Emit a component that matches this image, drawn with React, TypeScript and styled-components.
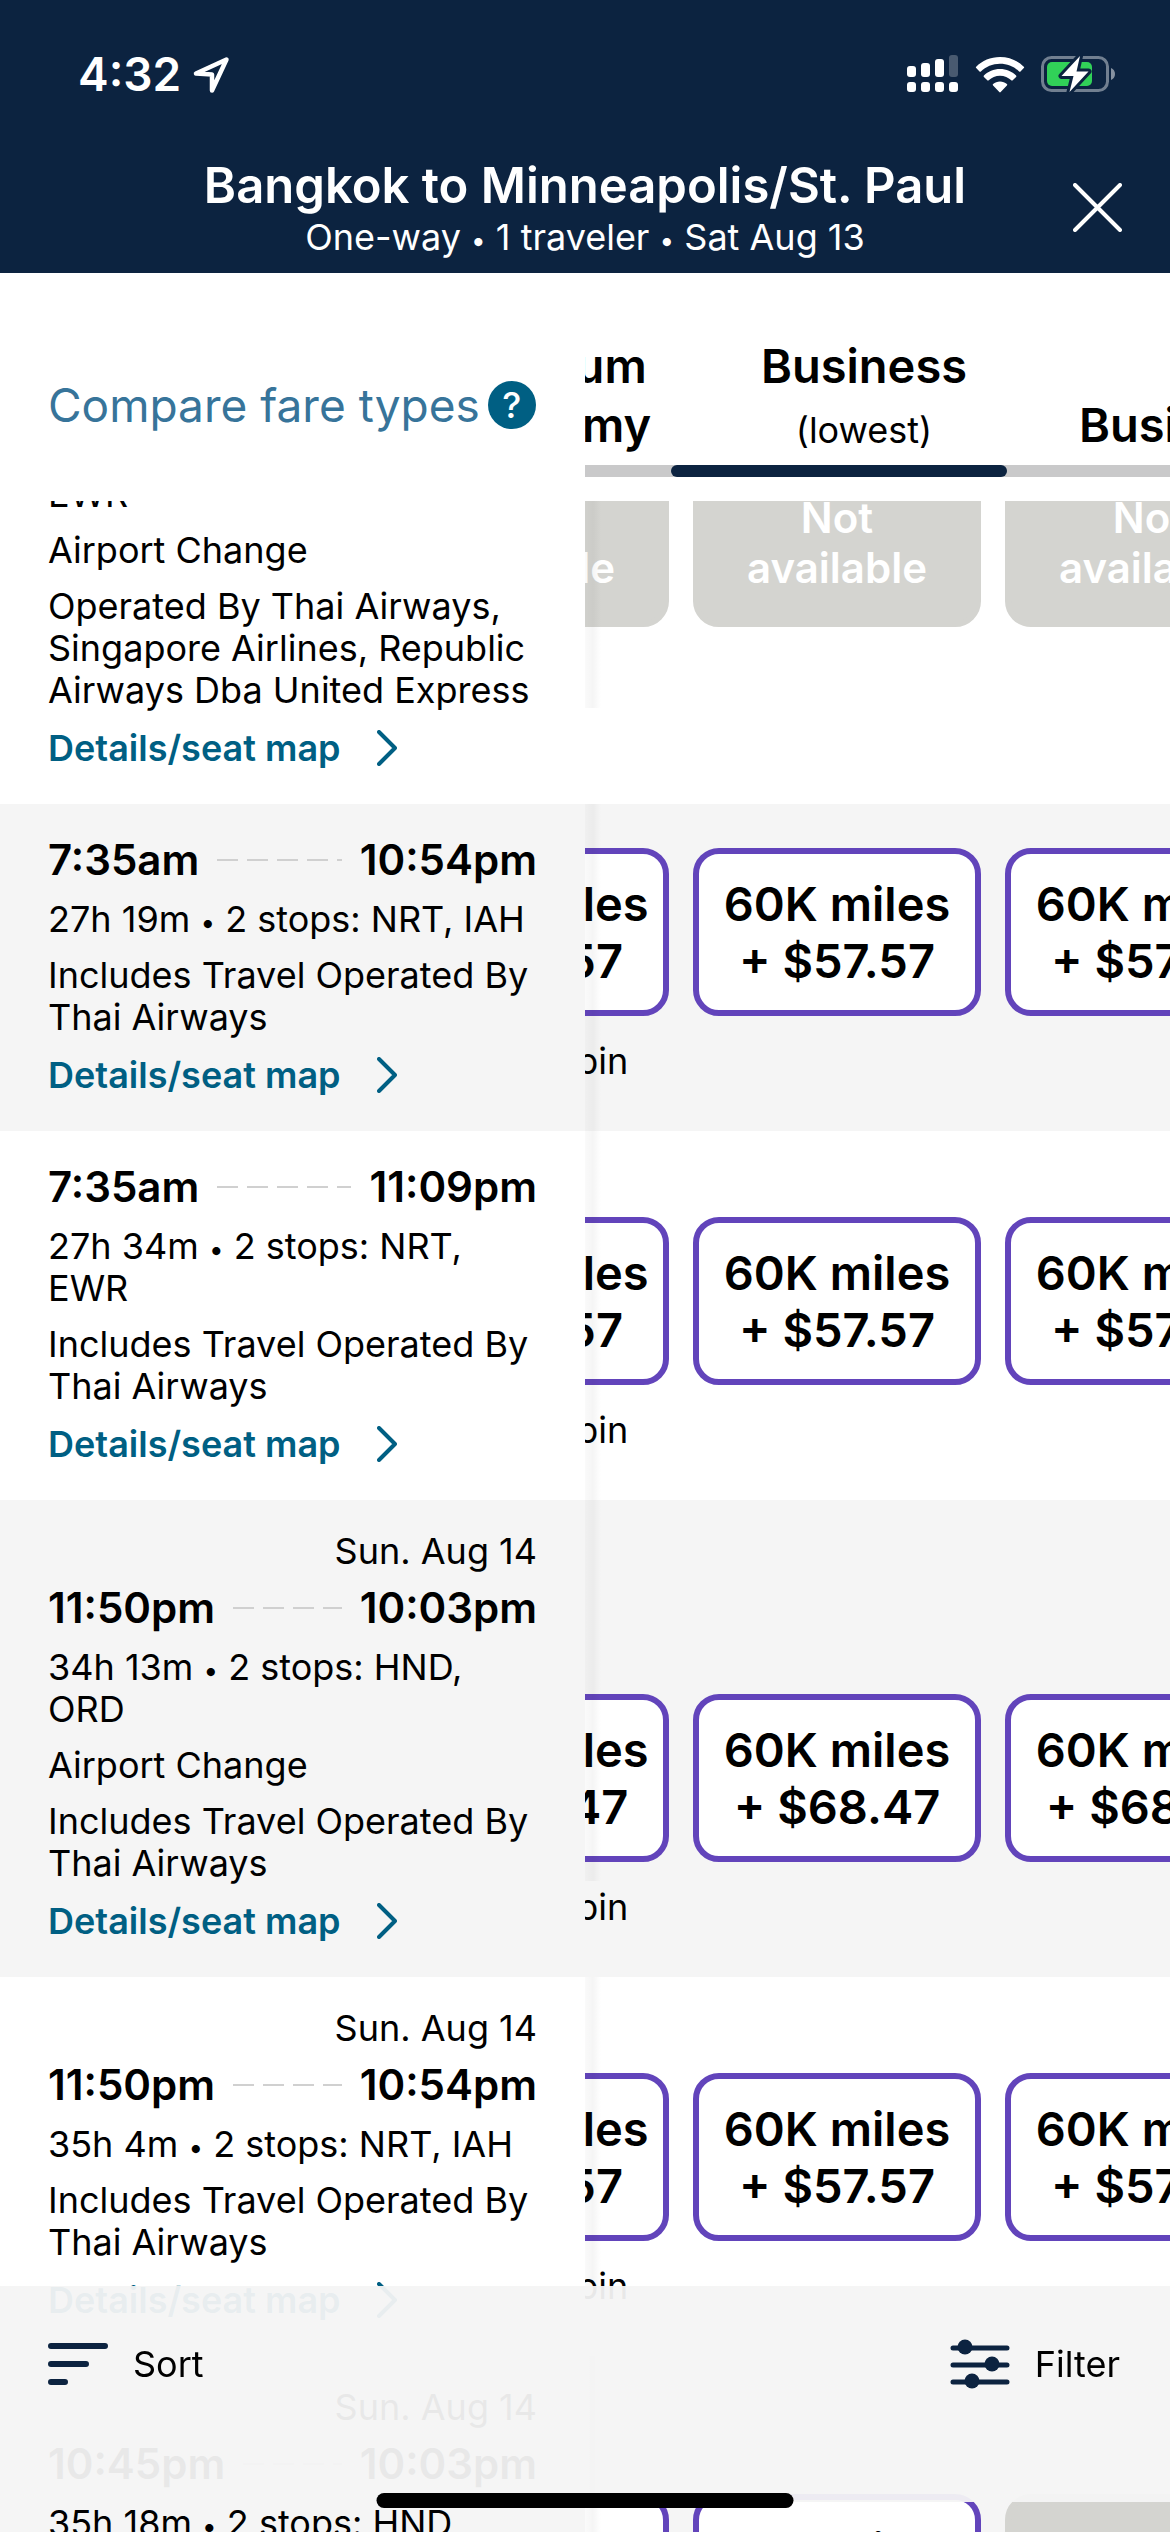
import React, { Fragment, useLayoutEffect, useRef } from "react";
import styled, { createGlobalStyle } from "styled-components";

const navy = "#0c2340";
const teal = "#005f83";
const purple = "#6244bb";
const sans = `Inter, "Noto Sans", "Liberation Sans", sans-serif`;

const GlobalStyle = createGlobalStyle`
  * { box-sizing: border-box; }
  body { margin: 0; background: #fff; color: #000; font-family: ${sans}; }
  button { font-family: inherit; color: inherit; margin: 0; padding: 0; border: 0; background: none; }
`;

const Screen = styled.div`
  position: relative;
  display: flex;
  flex-direction: column;
  height: 100vh;
  overflow: hidden;
`;

/* Header */
const Header = styled.header`
  background: ${navy};
  color: #fff;
`;

const StatusBar = styled.div`
  display: flex;
  align-items: center;
  justify-content: space-between;
  height: 148px;
  padding: 0 54px 0 78px;
`;

const StatusGroup = styled.div<{ $gap: number }>`
  display: flex;
  align-items: center;
  gap: ${(p) => p.$gap}px;
`;

const Clock = styled.span`
  font-size: 46px;
  line-height: 54px;
  font-weight: 600;
`;

const TitleBar = styled.div`
  display: grid;
  grid-template-columns: 1fr auto 1fr;
  align-items: center;
  padding: 8px 48px 15px;
`;

const TitleText = styled.div`
  grid-column: 2;
  text-align: center;
`;

const Title = styled.h1`
  margin: 0;
  font-size: 49px;
  line-height: 60px;
  font-weight: 600;
`;

const Subtitle = styled.p`
  margin: 0;
  font-size: 36px;
  line-height: 42px;
`;

const Bullet = styled.span`
  font-size: 26px;
  line-height: 0;
`;

const CloseButton = styled.button`
  grid-column: 3;
  justify-self: end;
  display: flex;
`;

/* Fare type header */
const Split = styled.div`
  display: grid;
  grid-template-columns: minmax(0, 1fr) minmax(0, 1fr);
`;

const CompareCell = styled.div`
  display: flex;
  align-items: center;
  padding: 36px 48px 0;
`;

const CompareLink = styled.a`
  display: flex;
  align-items: center;
  gap: 8px;
  color: #37749a;
  font-size: 46px;
  line-height: 57px;
  white-space: nowrap;
  text-decoration: none;
`;

const HelpBadge = styled.span`
  display: flex;
  align-items: center;
  justify-content: center;
  flex: none;
  width: 48px;
  height: 48px;
  border-radius: 50%;
  background: ${teal};
  color: #fff;
  font-size: 36px;
  line-height: 42px;
  font-weight: 500;
`;

const Scroller = styled.div`
  overflow-x: auto;
  scrollbar-width: none;
`;

const CabinTrack = styled.div`
  display: flex;
  flex-direction: column;
  width: max-content;
  padding: 63px 0 24px;
`;

const CabinTabs = styled.div`
  display: flex;
  align-items: flex-end;
  padding: 0 6px 11px;
`;

const CabinTab = styled.button`
  width: 318px;
  font-size: 47px;
  line-height: 59px;
  font-weight: 600;
`;

const CabinNote = styled.span`
  display: block;
  margin-top: 12px;
  font-size: 36px;
  line-height: 47px;
  font-weight: 400;
`;

const Rail = styled.div`
  padding-left: 290px;
  background: #c9c9ca;
`;

const RailThumb = styled.div`
  width: 336px;
  height: 12px;
  border-radius: 6px;
  background: ${navy};
`;

/* Flight list */
const FlightList = styled.main`
  flex: 1;
  min-height: 0;
  overflow-y: auto;
  scrollbar-width: none;
`;

const FlightRow = styled(Split)<{ $shaded: boolean }>`
  background: ${(p) => (p.$shaded ? "#f5f5f5" : "#fff")};
`;

const FlightInfo = styled.div`
  display: flex;
  flex-direction: column;
  gap: 14px;
  padding: 32px 48px 33px;
  font-size: 36px;
  line-height: 42px;
`;

const ArrivalDate = styled.div`
  line-height: 38px;
  text-align: right;
`;

const Times = styled.div`
  display: flex;
  align-items: center;
  gap: 18px;
  font-size: 42px;
  line-height: 48px;
  font-weight: 600;
`;

const Dashes = styled.span`
  flex: 1;
  height: 2px;
  background: repeating-linear-gradient(90deg, #d0d0d0 0 21px, transparent 21px 30px);
`;

const Line = styled.div``;

const DetailsLink = styled.a`
  display: flex;
  align-items: center;
  gap: 36px;
  color: ${teal};
  line-height: 46px;
  font-weight: 600;
  text-decoration: none;
`;

const FarePane = styled.div<{ $shadowEnd: number }>`
  position: relative;
  display: flex;
  min-width: 0;
  &::after {
    content: "";
    position: absolute;
    top: 0;
    left: 0;
    bottom: ${(p) => p.$shadowEnd}px;
    width: 16px;
    background: linear-gradient(90deg, rgba(0, 0, 0, 0.02), rgba(0, 0, 0, 0.04) 50%, transparent);
    pointer-events: none;
  }
`;

const FareScroller = styled(Scroller)`
  display: flex;
  align-items: flex-end;
  flex: 1;
`;

const FareTrack = styled.div<{ $below: number }>`
  display: flex;
  gap: 24px;
  height: ${(p) => p.$below + 168}px;
`;

const FareColumn = styled.div`
  flex: none;
  width: 288px;
  text-align: center;
`;

const FareButton = styled.button`
  display: block;
  width: 100%;
  height: 168px;
  border: 6px solid ${purple};
  border-radius: 26px;
  background: #fff;
  font-size: 47px;
  line-height: 57px;
  font-weight: 600;
  white-space: pre-line;
  &:disabled {
    border-color: #d4d4d0;
    background: #d4d4d0;
    color: #fff;
    font-size: 42px;
    line-height: 50px;
  }
`;

const CabinCaption = styled.div`
  margin-top: 24px;
  font-size: 36px;
  line-height: 42px;
`;

/* Bottom toolbar */
const Toolbar = styled.footer`
  position: absolute;
  left: 0;
  right: 0;
  bottom: 30px;
  display: flex;
  align-items: flex-start;
  justify-content: space-between;
  height: 216px;
  padding: 51px 50px 0 48px;
  background: rgba(244, 244, 244, 0.95);
`;

const ToolButton = styled.button`
  display: flex;
  align-items: center;
  gap: 25px;
  font-size: 36px;
  line-height: 54px;
`;

const HomeIndicator = styled.div`
  position: absolute;
  left: 50%;
  bottom: 24px;
  width: 417px;
  height: 15px;
  border-radius: 8px;
  background: #000;
  transform: translateX(-50%);
`;

/* Icons */
const LocationIcon = () => (
  <svg width="37" height="37" viewBox="0 0 37 37" fill="none" stroke="#fff" strokeWidth="4.5" strokeLinejoin="round">
    <path d="M33.500 3.500 3 17.500 19 18.500V34.500Z" />
  </svg>
);

const SignalIcon = () => (
  <svg width="52" height="38" viewBox="0 0 52 38" fill="#fff">
    <rect x="0" y="11" width="9" height="11" rx="3" />
    <rect x="14" y="8" width="9" height="14" rx="3" />
    <rect x="28" y="4" width="9" height="18" rx="3" />
    <rect x="42" y="0" width="9" height="22" rx="3" opacity="0.25" />
    <rect x="0" y="27" width="9" height="10" rx="3" />
    <rect x="14" y="27" width="9" height="10" rx="3" />
    <rect x="28" y="27" width="9" height="10" rx="3" />
    <rect x="42" y="27" width="9" height="10" rx="3" />
  </svg>
);

const WifiIcon = () => (
  <svg width="50" height="37" viewBox="0 0 50 37" fill="#fff">
    <path d="M25 1C15.600 1 7.100 4.700 1.200 10.700a1 1 0 0 0 0 1.400l3.300 3.300a1 1 0 0 0 1.400 0C10.800 10.600 17.500 7.700 25 7.700s14.200 2.900 19.100 7.700a1 1 0 0 0 1.400 0l3.300-3.300a1 1 0 0 0 0-1.400C42.900 4.700 34.400 1 25 1Z" />
    <path d="M25 13c-6.300 0-12 2.500-16.100 6.500a1 1 0 0 0 0 1.400l3.400 3.400a1 1 0 0 0 1.400 0C16.600 21.500 20.600 19.700 25 19.700s8.400 1.800 11.300 4.600a1 1 0 0 0 1.400 0l3.400-3.400a1 1 0 0 0 0-1.400C37 15.500 31.300 13 25 13Z" />
    <path d="M25 25.500c-2.700 0-5 .9-6.900 2.400a1 1 0 0 0 0 1.500l6.200 6.700a1 1 0 0 0 1.400 0l6.200-6.700a1 1 0 0 0 0-1.500C30 26.400 27.700 25.500 25 25.500Z" />
  </svg>
);

const BatteryIcon = () => (
  <svg width="75" height="40" viewBox="0 0 75 40" fill="none">
    <rect x="1.500" y="3.500" width="65" height="33" rx="9" stroke="#fff" strokeOpacity="0.42" strokeWidth="3" />
    <path d="M70 14v12c2.500-1 4-3 4-6s-1.500-5-4-6Z" fill="#fff" fillOpacity="0.5" />
    <rect x="6" y="8" width="45" height="24" rx="5" fill="#31d158" />
    <path d="M39 2 20.500 22H32.500L28.500 38 47.500 17.500H35.500Z" fill="#fff" stroke={navy} strokeWidth="6" strokeLinejoin="round" paintOrder="stroke" />
  </svg>
);

const CloseIcon = () => (
  <svg width="49" height="49" viewBox="0 0 49 49" stroke="#fff" strokeWidth="4" strokeLinecap="round">
    <path d="M2 2 47 47M47 2 2 47" />
  </svg>
);

const ChevronIcon = () => (
  <svg width="20" height="36" viewBox="0 0 20 36" fill="none" stroke={teal} strokeWidth="4" strokeLinecap="round" strokeLinejoin="round">
    <path d="M2 2 18 18 2 34" />
  </svg>
);

const SortIcon = () => (
  <svg width="60" height="44" viewBox="0 0 60 44" stroke={navy} strokeWidth="6" strokeLinecap="round">
    <path d="M3 4H57M3 22H38M3 40H17" />
  </svg>
);

const FilterIcon = () => (
  <svg width="60" height="52" viewBox="0 0 60 52" stroke={navy} strokeWidth="5" strokeLinecap="round" fill={navy}>
    <path d="M3 10H57M3 27H57M3 44H57" />
    <g stroke="none">
      <circle cx="15" cy="9" r="7.500" />
      <circle cx="42" cy="26" r="7.500" />
      <circle cx="22" cy="43" r="7.500" />
    </g>
  </svg>
);

const Facts = ({ items }: { items: string[] }) => (
  <>
    {items.map((item, i) => (
      <Fragment key={item}>
        {i > 0 && (
          <>
            {" "}
            <Bullet>•</Bullet>{" "}
          </>
        )}
        {item}
      </Fragment>
    ))}
  </>
);

type Flight = {
  arrivalDate?: string;
  departs: string;
  arrives: string;
  route: string[];
  airportChange?: boolean;
  operatedBy: string;
  fares: (string | null)[];
  caption?: string;
  below: number;
};

const thai = "Includes Travel Operated By Thai Airways";

const fareSet = (tax: string) => [`100K miles\n+ ${tax}`, `60K miles\n+ ${tax}`, `60K miles\n+ ${tax}`];

const flights: Flight[] = [
  {
    departs: "7:35am",
    arrives: "10:09pm",
    route: ["26h 34m", "3 stops: SIN, EWR"],
    airportChange: true,
    operatedBy: "Operated By Thai Airways, Singapore Airlines, Republic Airways Dba United Express",
    fares: [null, null, null],
    below: 177,
  },
  {
    departs: "7:35am",
    arrives: "10:54pm",
    route: ["27h 19m", "2 stops: NRT, IAH"],
    operatedBy: thai,
    fares: fareSet("$57.57"),
    caption: "Mixed cabin",
    below: 115,
  },
  {
    departs: "7:35am",
    arrives: "11:09pm",
    route: ["27h 34m", "2 stops: NRT, EWR"],
    operatedBy: thai,
    fares: fareSet("$57.57"),
    caption: "Mixed cabin",
    below: 115,
  },
  {
    arrivalDate: "Sun. Aug 14",
    departs: "11:50pm",
    arrives: "10:03pm",
    route: ["34h 13m", "2 stops: HND, ORD"],
    airportChange: true,
    operatedBy: thai,
    fares: fareSet("$68.47"),
    caption: "Mixed cabin",
    below: 115,
  },
  {
    arrivalDate: "Sun. Aug 14",
    departs: "11:50pm",
    arrives: "10:54pm",
    route: ["35h 4m", "2 stops: NRT, IAH"],
    operatedBy: thai,
    fares: fareSet("$57.57"),
    caption: "Mixed cabin",
    below: 115,
  },
  {
    arrivalDate: "Sun. Aug 14",
    departs: "10:45pm",
    arrives: "10:03pm",
    route: ["35h 18m", "2 stops: HND, ORD"],
    operatedBy: thai,
    fares: ["100K miles\n+ $68.47", "60K miles\n+ $68.47", null],
    caption: "Mixed cabin",
    below: 115,
  },
];

const SCROLL_TOP = 164;
const SCROLL_LEFT = 204;

const scrollToCabin = (el: HTMLDivElement | null) => {
  if (el) el.scrollLeft = SCROLL_LEFT;
};

const FlightItem = ({ flight, shaded }: { flight: Flight; shaded: boolean }) => (
  <FlightRow $shaded={shaded}>
    <FlightInfo>
      {flight.arrivalDate && <ArrivalDate>{flight.arrivalDate}</ArrivalDate>}
      <Times>
        <span>{flight.departs}</span>
        <Dashes />
        <span>{flight.arrives}</span>
      </Times>
      <Line>
        <Facts items={flight.route} />
      </Line>
      {flight.airportChange && <Line>Airport Change</Line>}
      <Line>{flight.operatedBy}</Line>
      <DetailsLink href="#details">
        Details/seat map
        <ChevronIcon />
      </DetailsLink>
    </FlightInfo>
    <FarePane $shadowEnd={flight.airportChange ? 96 : 0}>
      <FareScroller ref={scrollToCabin}>
        <FareTrack $below={flight.below}>
          {flight.fares.map((fare, i) => (
            <FareColumn key={i}>
              <FareButton type="button" disabled={fare === null}>
                {fare ?? "Not\navailable"}
              </FareButton>
              {i === 0 && flight.caption && <CabinCaption>{flight.caption}</CabinCaption>}
            </FareColumn>
          ))}
        </FareTrack>
      </FareScroller>
    </FarePane>
  </FlightRow>
);

export default function App() {
  const list = useRef<HTMLElement>(null);

  useLayoutEffect(() => {
    if (list.current) list.current.scrollTop = SCROLL_TOP;
  }, []);

  return (
    <Screen>
      <GlobalStyle />
      <Header>
        <StatusBar>
          <StatusGroup $gap={12}>
            <Clock>4:32</Clock>
            <LocationIcon />
          </StatusGroup>
          <StatusGroup $gap={16}>
            <SignalIcon />
            <WifiIcon />
            <BatteryIcon />
          </StatusGroup>
        </StatusBar>
        <TitleBar>
          <TitleText>
            <Title>Bangkok to Minneapolis/St. Paul</Title>
            <Subtitle>
              <Facts items={["One-way", "1 traveler", "Sat Aug 13"]} />
            </Subtitle>
          </TitleText>
          <CloseButton type="button" aria-label="Close">
            <CloseIcon />
          </CloseButton>
        </TitleBar>
      </Header>

      <Split>
        <CompareCell>
          <CompareLink href="#fare-types">
            Compare fare types
            <HelpBadge>?</HelpBadge>
          </CompareLink>
        </CompareCell>
        <Scroller ref={scrollToCabin}>
          <CabinTrack>
            <CabinTabs>
              <CabinTab type="button">
                Premium
                <br />
                economy
              </CabinTab>
              <CabinTab type="button">
                Business
                <CabinNote>(lowest)</CabinNote>
              </CabinTab>
              <CabinTab type="button">Business</CabinTab>
            </CabinTabs>
            <Rail>
              <RailThumb />
            </Rail>
          </CabinTrack>
        </Scroller>
      </Split>

      <FlightList ref={list}>
        {flights.map((flight, i) => (
          <FlightItem key={i} flight={flight} shaded={i % 2 === 1} />
        ))}
      </FlightList>

      <Toolbar>
        <ToolButton type="button">
          <SortIcon />
          Sort
        </ToolButton>
        <ToolButton type="button">
          <FilterIcon />
          Filter
        </ToolButton>
      </Toolbar>
      <HomeIndicator />
    </Screen>
  );
}
